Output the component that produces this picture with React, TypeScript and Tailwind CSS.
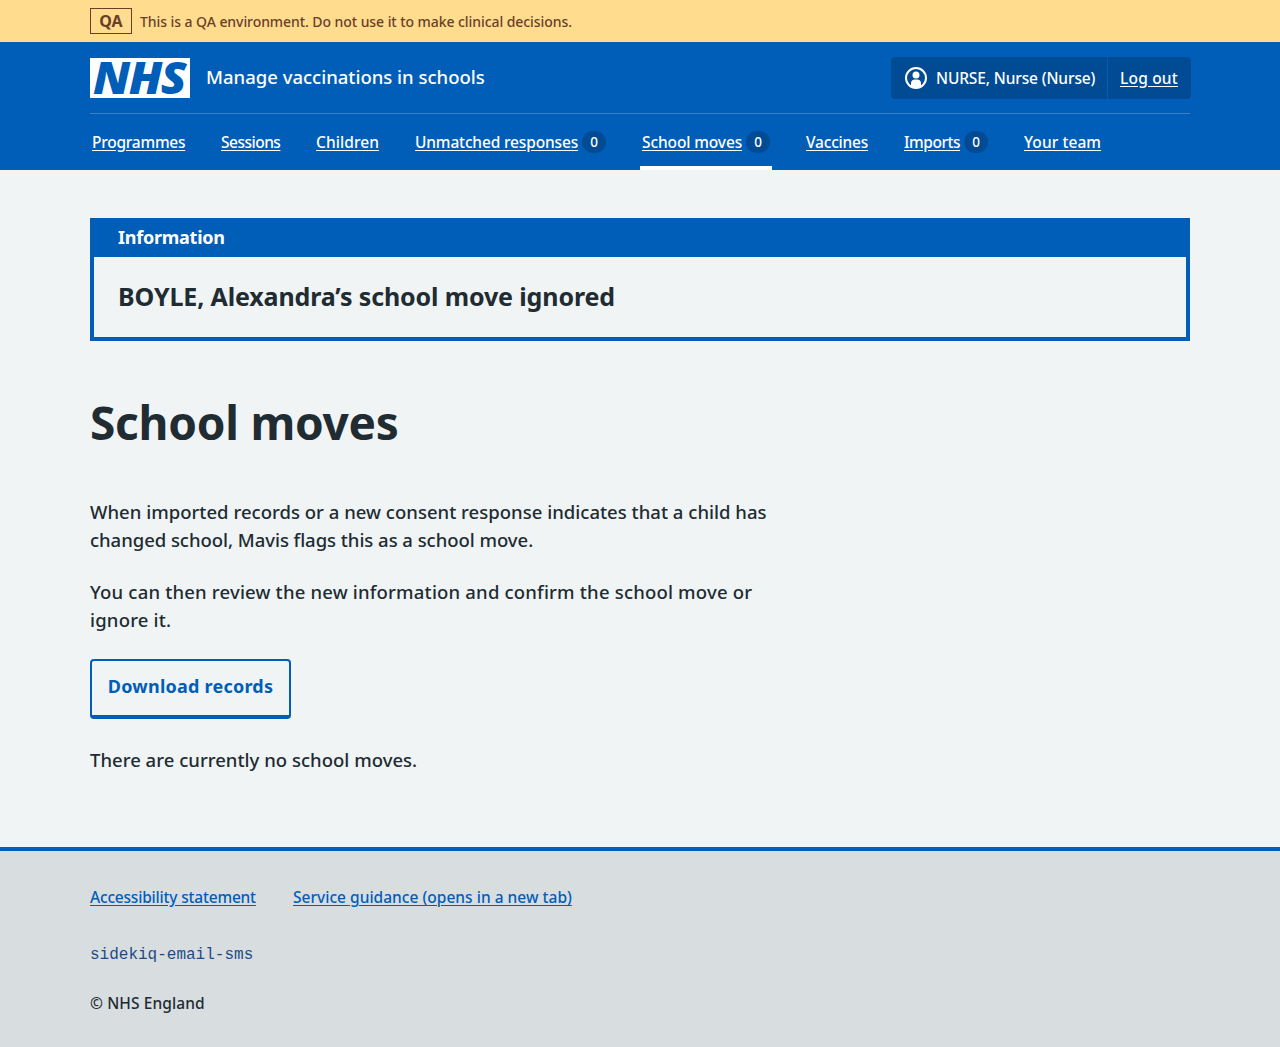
type NavItem = { label: string; width: string; tracking: string; count?: number; active?: boolean };

const navItems: NavItem[] = [
  { label: 'Programmes', width: 'w-[93px]', tracking: 'tracking-[-0.24px]' },
  { label: 'Sessions', width: 'w-[59px]', tracking: 'tracking-[-0.5px]' },
  { label: 'Children', width: 'w-[63px]', tracking: 'tracking-[0.07px]' },
  { label: 'Unmatched responses', width: 'w-[163px]', tracking: 'tracking-[-0.15px]', count: 0 },
  { label: 'School moves', width: 'w-[100px]', tracking: 'tracking-[-0.11px]', count: 0, active: true },
  { label: 'Vaccines', width: 'w-[62px]', tracking: 'tracking-[-0.19px]' },
  { label: 'Imports', width: 'w-[56px]', tracking: 'tracking-[-0.46px]', count: 0 },
  { label: 'Your team', width: 'w-[77px]', tracking: 'tracking-[0.07px]' },
];

function EnvironmentBanner() {
  return (
    <div className="h-[42px] bg-[#ffdc8e] text-[#6a3f2a]">
      <div className="mx-auto flex h-full w-[1100px] items-center gap-2">
        <strong className="flex h-[26px] w-[42px] items-center justify-center border border-[#6a3f2a] text-base leading-none font-bold">
          QA
        </strong>
        <span className="pt-0.5 text-sm leading-none tracking-[-0.066px]">
          This is a QA environment. Do not use it to make clinical decisions.
        </span>
      </div>
    </div>
  );
}

function Logo() {
  return (
    <svg className="h-10 w-[100px] shrink-0 overflow-visible" viewBox="0 0 100 40" role="img" aria-label="NHS">
      <rect width="100" height="40" fill="#fff" />
      <text
        x="3"
        y="36"
        textLength="92"
        lengthAdjust="spacingAndGlyphs"
        fill="#005eb8"
        fontFamily="Noto Sans, sans-serif"
        fontSize="45"
        fontWeight="900"
        fontStyle="italic"
        letterSpacing="-1.5"
      >
        NHS
      </text>
    </svg>
  );
}

function AccountIcon() {
  return (
    <svg className="size-6 shrink-0" viewBox="0 0 24 24" aria-hidden="true">
      <circle cx="12" cy="12" r="10" fill="none" stroke="#fff" strokeWidth="2" />
      <circle cx="12" cy="9" r="3.500" fill="#fff" />
      <path d="M7 20v-2.500a4 4 0 0 1 4-4h2a4 4 0 0 1 4 4V20a9.500 9.500 0 0 1-10 0Z" fill="#fff" />
    </svg>
  );
}

function Header() {
  return (
    <header className="h-32 bg-[#005eb8] text-white">
      <div className="mx-auto w-[1100px]">
        <div className="flex h-[72px] items-center border-b border-[#3a7fc7]">
          <Logo />
          <span className="ml-4 pb-0.5 text-[18.5px] leading-7">Manage vaccinations in schools</span>
          <div className="-mr-px ml-auto flex h-[42px] w-[300px] rounded bg-[#004b93]">
            <div className="flex w-[217px] items-center border-r border-[#005eb8] pl-[13px] whitespace-nowrap">
              <AccountIcon />
              <span className="ml-2 leading-6 tracking-[-0.13px]">NURSE, Nurse (Nurse)</span>
            </div>
            <a href="#" className="self-center pl-3 leading-6 tracking-[0.2px] whitespace-nowrap underline underline-offset-2">
              Log out
            </a>
          </div>
        </div>
        <nav className="flex h-14 gap-8">
          {navItems.map((item) => (
            <a
              key={item.label}
              href="#"
              className={`flex items-center border-b-4 px-0.5 pt-1 ${item.active ? 'border-white' : 'border-transparent'}`}
            >
              <span className={`leading-6 whitespace-nowrap underline underline-offset-2 ${item.width} ${item.tracking}`}>
                {item.label}
              </span>
              {item.count !== undefined && (
                <span className="ml-1 flex h-[22px] w-6 items-center justify-center rounded-full bg-[#004b93] pt-px text-[13.5px] leading-none">
                  {item.count}
                </span>
              )}
            </a>
          ))}
        </nav>
      </div>
    </header>
  );
}

export default function App() {
  return (
    <div className="flex h-[1047px] flex-col bg-[#f0f4f5] font-['Noto_Sans',sans-serif] text-[15.5px] font-medium text-[#212b32]">
      <EnvironmentBanner />
      <Header />
      <main className="mx-auto w-[1100px] flex-1 pt-12 text-[18.5px] leading-7">
        <section className="border-4 border-t-0 border-[#005eb8]">
          <h2 className="-mx-1 h-[39px] bg-[#005eb8] pl-7 text-lg leading-[39px] font-bold tracking-[-0.24px] text-white">
            Information
          </h2>
          <p className="h-20 pl-6 text-[25px] leading-[78px] font-bold tracking-[-0.13px]">
            BOYLE, Alexandra’s school move ignored
          </p>
        </section>
        <h1 className="mt-[53px] text-[46px] leading-[56px] font-bold tracking-[-0.25px]">School moves</h1>
        <div className="mt-12 flex flex-col gap-6 whitespace-nowrap">
          <p>
            <span className="tracking-[0.02px]">
              When imported records or a new consent response indicates that a child has
            </span>
            <br />
            <span className="tracking-[-0.04px]">changed school, Mavis flags this as a school move.</span>
          </p>
          <p className="tracking-[0.19px]">
            You can then review the new information and confirm the school move or
            <br />
            ignore it.
          </p>
        </div>
        <button className="mt-[25px] block h-[60px] w-[201px] rounded border-2 border-b-4 border-[#005eb8] pb-1 text-lg leading-[50px] font-bold tracking-[0.23px] text-[#005eb8]">
          Download records
        </button>
        <p className="mt-[27px] tracking-[0.02px]">There are currently no school moves.</p>
      </main>
      <footer className="h-[200px] border-t-4 border-[#005eb8] bg-[#d8dde0]">
        <div className="mx-auto flex w-[1100px] flex-col pt-[34px] leading-6">
          <div className="flex text-[#005eb8]">
            <a href="#" className="w-[203px] tracking-[-0.19px]">
              <span className="underline underline-offset-2">Accessibility statement</span>
            </a>
            <a href="#" className="tracking-[0.02px] underline underline-offset-2">
              Service guidance (opens in a new tab)
            </a>
          </div>
          <code className="mt-[34px] font-['Liberation_Mono',monospace] text-base leading-6 font-normal text-[#1d4b87]">
            sidekiq-email-sms
          </code>
          <p className="mt-6 tracking-[0.1px]">© NHS England</p>
        </div>
      </footer>
    </div>
  );
}
